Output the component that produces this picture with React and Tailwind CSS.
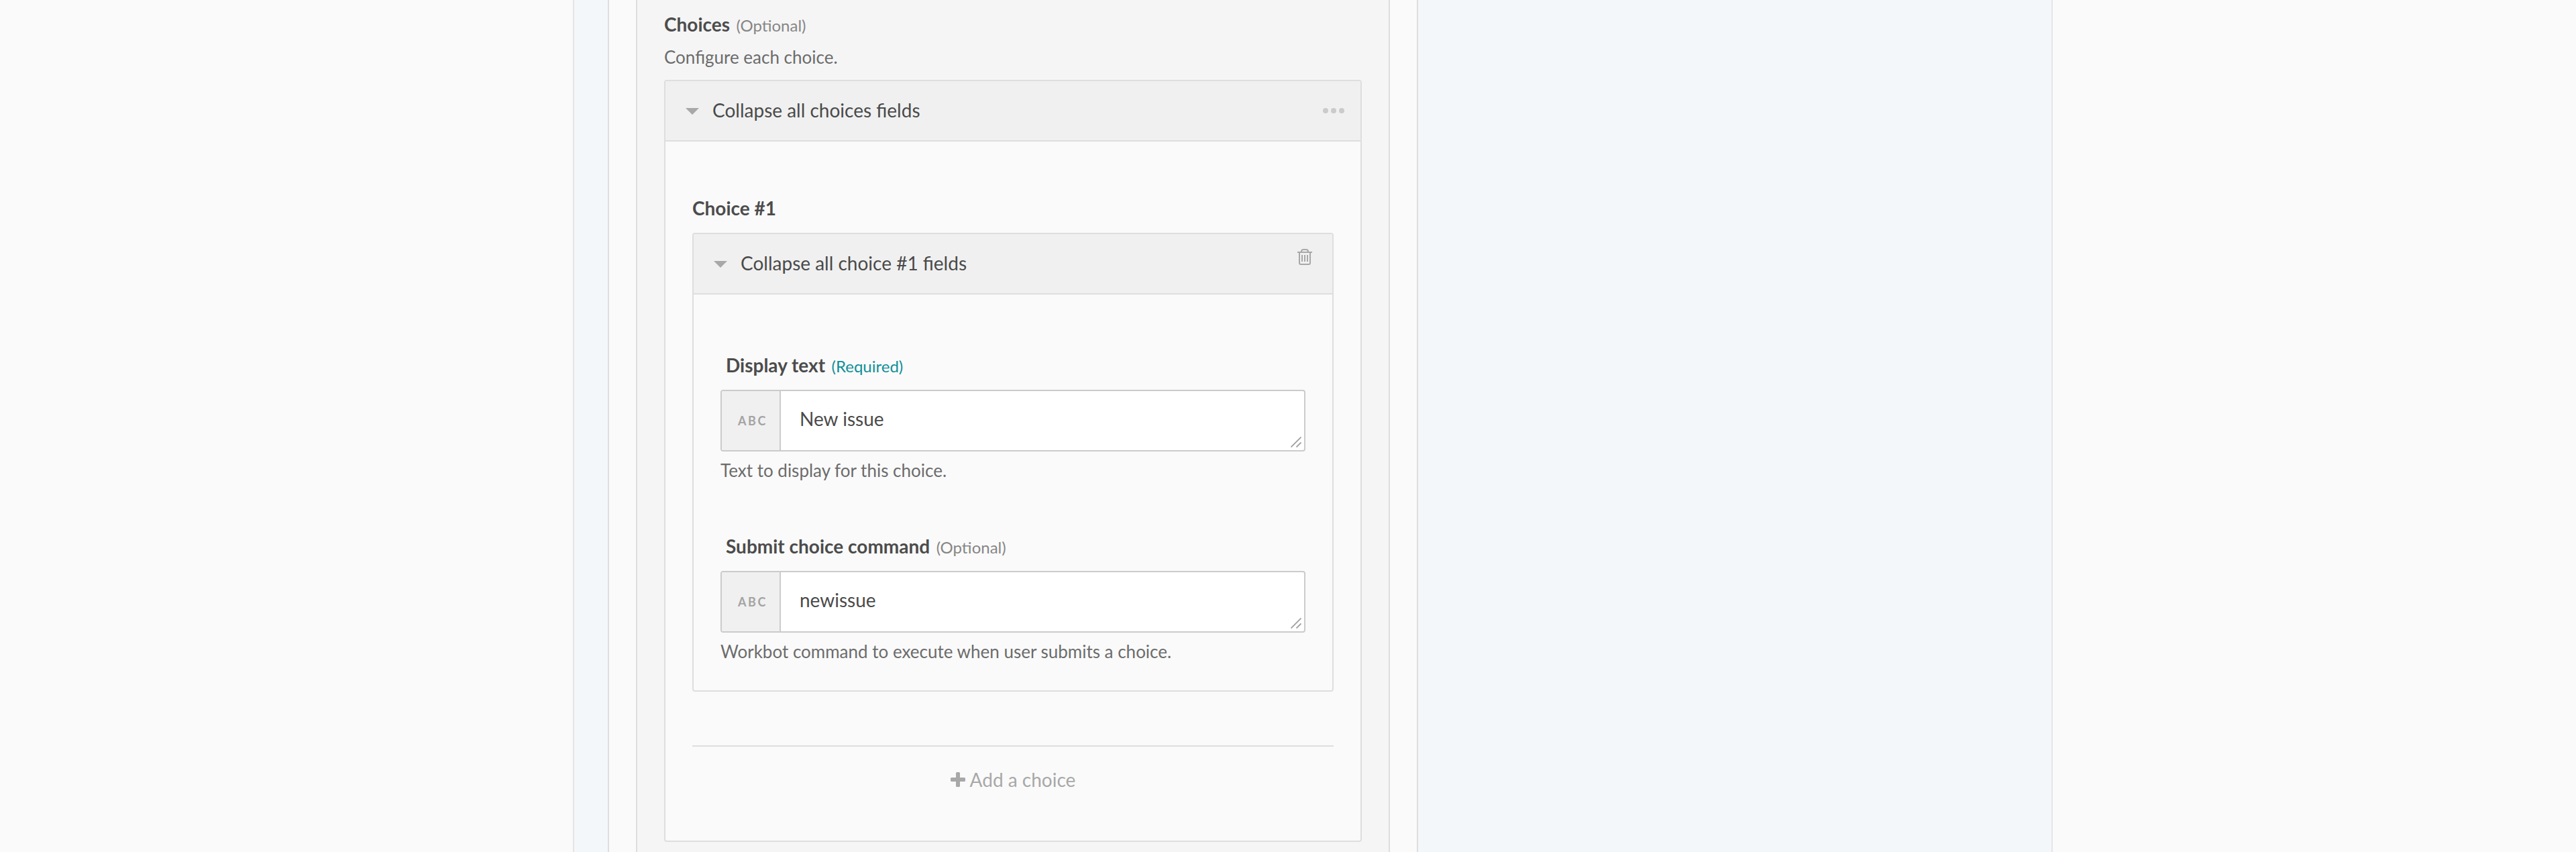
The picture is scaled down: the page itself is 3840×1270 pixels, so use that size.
import React from "react";

function Label({ text, hint, required, className = "" }) {
  return (
    <div className={`flex h-[34px] items-baseline leading-[34px] ${className}`}>
      <span className="text-[28px] font-bold text-[#4c4c4c]">{text}</span>
      {hint && (
        <span className={required ? "ml-[9.5px] text-[24px] text-[#108f98]" : "ml-[9.5px] text-[24px] text-[#868686]"}>
          {hint}
        </span>
      )}
    </div>
  );
}

function GroupHeader({ text, children }) {
  return (
    <div className="flex h-[90px] items-stretch border-b-2 border-[#dedede] bg-[#f0f0f0]">
      <svg className="mt-10 ml-[30px] h-[10px] w-5 shrink-0" viewBox="0 0 20 10">
        <path d="M0 0H20L10 10Z" fill="#a8a8a8" />
      </svg>
      <span className="ml-5 flex-1 pt-[26px] text-[28px] leading-[34px] text-[#4a4a4a]">{text}</span>
      {children}
    </div>
  );
}

function Field({ label, hint, required, value, help }) {
  return (
    <div className="h-[270px]">
      <Label text={label} hint={hint} required={required} className="ml-2" />
      <div className="mt-5 flex h-[92px] overflow-hidden rounded-[4px] border-2 border-[#cbcbcb] bg-white">
        <div className="w-[88px] border-r-2 border-[#cbcbcb] bg-[#f0f0f0] pt-[33px] pl-6 text-[18px] leading-[22px] font-bold tracking-[2.6px] text-[#a4a4a4]">
          ABC
        </div>
        <div className="flex-1 pt-6 pl-7 text-[28px] leading-[34px] text-[#4a4a4a]">{value}</div>
        <svg className="mt-[68px] mr-1 h-4 w-4 shrink-0" viewBox="0 0 16 16" fill="none" stroke="#a0a0a0" strokeWidth="1.8">
          <path d="M0.5 15.5L15.5 0.5M8.5 15.5L15.5 8.5" />
        </svg>
      </div>
      <p className="mt-3 text-[26px] leading-[32px] text-[#6c6c6c]">{help}</p>
    </div>
  );
}

export default function App() {
  return (
    <div className="flex h-[1270px] w-[3840px] justify-start overflow-hidden bg-[#fafafa] pl-[854px] font-['Lato',sans-serif]">
      <div className="flex w-[2206px] border-x-2 border-[#e5e5e5] bg-[#f3f7fa] pl-[50px]">
        <div className="w-[1208px] border-x-2 border-[#dedede] bg-[#fafafa] px-10">
          <div className="h-full border-x-2 border-[#dedede] bg-[#f5f5f5] px-10 pt-[19px]">
            <Label text="Choices" hint="(Optional)" />
            <p className="mt-4 text-[26px] leading-[32px] text-[#6c6c6c]">Configure each choice.</p>

            <section className="mt-[18px] h-[1136px] overflow-hidden rounded-[4px] border-2 border-[#dedede] bg-[#fafafa]">
              <GroupHeader text="Collapse all choices fields">
                <div className="mt-10 mr-6 flex gap-1">
                  <i className="h-2 w-2 rounded-full bg-[#cbcbcb]" />
                  <i className="h-2 w-2 rounded-full bg-[#cbcbcb]" />
                  <i className="h-2 w-2 rounded-full bg-[#cbcbcb]" />
                </div>
              </GroupHeader>

              <div className="px-10 pt-[82px]">
                <Label text="Choice #1" />
                <div className="mt-5 h-[684px] overflow-hidden rounded-[4px] border-2 border-[#dedede]">
                  <GroupHeader text="Collapse all choice #1 fields">
                    <svg className="mt-[22px] mr-[30px] h-6 w-[22px]" viewBox="0 0 22 24" fill="none" stroke="#a8a8a8" strokeWidth="2">
                      <path d="M0 5H22M6 5V4Q6 1 9 1H13Q16 1 16 4V5M3 5V21Q3 23 5 23H17Q19 23 19 21V5M7 9V19M11 9V19M15 9V19" />
                    </svg>
                  </GroupHeader>
                  <div className="px-10 pt-[88px]">
                    <Field label="Display text" hint="(Required)" required value="New issue" help="Text to display for this choice." />
                    <Field
                      label="Submit choice command"
                      hint="(Optional)"
                      value="newissue"
                      help="Workbot command to execute when user submits a choice."
                    />
                  </div>
                </div>
                <div className="mt-20 flex justify-center border-t-2 border-[#dedede] pt-8 text-[28px] leading-[34px] text-[#a8a8a8]">
                  <svg className="mt-[6px] mr-[7px] h-[22px] w-[22px]" viewBox="0 0 22 22">
                    <path
                      d="M9.5 0H12.5Q14 0 14 1.5V8H20.5Q22 8 22 9.500V12.500Q22 14 20.500 14H14V20.500Q14 22 12.500 22H9.500Q8 22 8 20.500V14H1.500Q0 14 0 12.500V9.500Q0 8 1.500 8H8V1.500Q8 0 9.500 0Z"
                      fill="#a8a8a8"
                    />
                  </svg>
                  <span>Add a choice</span>
                </div>
              </div>
            </section>
          </div>
        </div>
      </div>
    </div>
  );
}
